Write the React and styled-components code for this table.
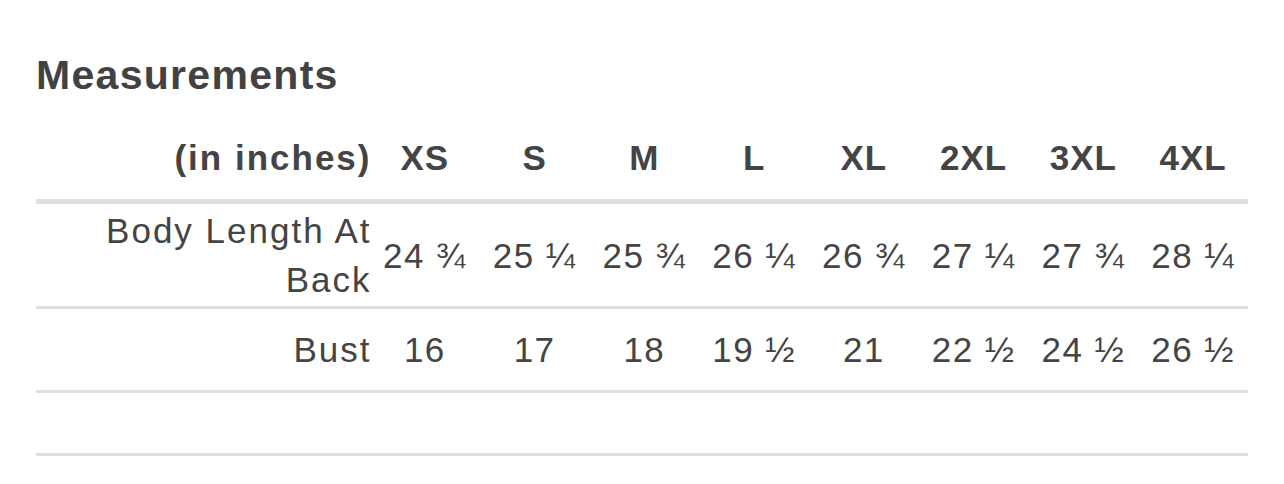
import React from "react";
import styled, { createGlobalStyle } from "styled-components";

const GlobalStyle = createGlobalStyle`
  html, body {
    margin: 0;
    padding: 0;
    background: #fff;
  }
  body {
    font-family: "Liberation Sans", Arial, Helvetica, sans-serif;
    color: #444;
  }
`;

const Page = styled.div`
  padding: 51px 36px 0 36px;
  width: 1212px;
`;

const Heading = styled.h2`
  margin: 0;
  font-size: 41px;
  line-height: 48px;
  font-weight: 700;
  letter-spacing: 1.3px;
  color: #424242;
`;

const Table = styled.div`
  margin-top: 16px;
  display: flex;
  flex-direction: column;
`;

const Row = styled.div`
  display: grid;
  grid-template-columns: 334px repeat(8, 1fr);
  align-items: center;
  min-height: ${(p) => p.$height}px;
  border-bottom: ${(p) => p.$border}px solid #e0e0e0;
  font-size: 35px;
  line-height: 49px;
  letter-spacing: 2px;
  font-weight: ${(p) => (p.$head ? 700 : 400)};
`;

const Label = styled.div`
  text-align: right;
  padding-left: 16px;
  margin-right: -1.5px;
`;

const Cell = styled.div`
  text-align: center;
  white-space: nowrap;
  letter-spacing: ${(p) => (p.$head ? "1px" : "1.5px")};
`;

const sizes = ["XS", "S", "M", "L", "XL", "2XL", "3XL", "4XL"];

const rows = [
  {
    label: "Body Length At Back",
    values: ["24 ¾", "25 ¼", "25 ¾", "26 ¼", "26 ¾", "27 ¼", "27 ¾", "28 ¼"],
    height: 102,
  },
  {
    label: "Bust",
    values: ["16", "17", "18", "19 ½", "21", "22 ½", "24 ½", "26 ½"],
    height: 81,
  },
];

export default function App() {
  return (
    <>
      <GlobalStyle />
      <Page>
        <Heading>Measurements</Heading>
        <Table>
          <Row $head $height={84} $border={5}>
            <Label>(in inches)</Label>
            {sizes.map((s) => (
              <Cell $head key={s}>
                {s}
              </Cell>
            ))}
          </Row>
          {rows.map((r) => (
            <Row key={r.label} $height={r.height} $border={3}>
              <Label>{r.label}</Label>
              {r.values.map((v, i) => (
                <Cell key={i}>{v}</Cell>
              ))}
            </Row>
          ))}
          <Row $height={60} $border={3} />
        </Table>
      </Page>
    </>
  );
}
